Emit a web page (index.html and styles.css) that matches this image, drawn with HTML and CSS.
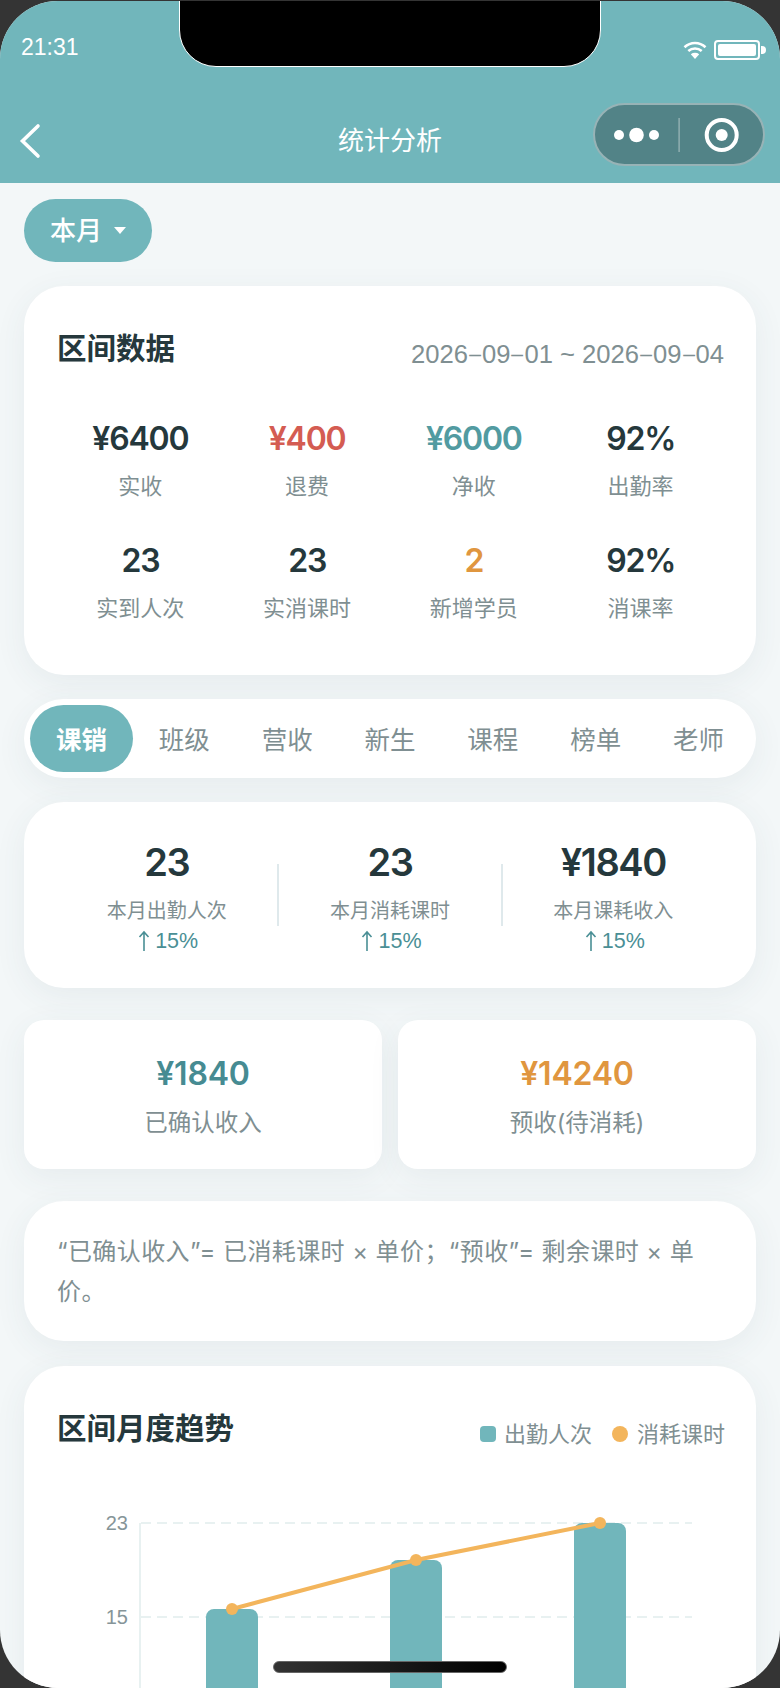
FILE: index.html
```html
<!DOCTYPE html>
<html lang="zh-CN">
<head>
<meta charset="utf-8">
<title>统计分析</title>
<link rel="stylesheet" href="styles.css">
</head>
<body>
<div class="device">
  <div class="screen">
    <header class="topbar">
      <div class="status">
        <span class="time">21:31</span>
        <div class="status-icons">
          <svg class="wifi" width="24" height="20" viewBox="0 0 24 20"><path class="wifi-arc" d="M1.5 7.2C7.5 1.6 16.5 1.6 22.5 7.2"/><path class="wifi-arc" d="M5.3 11C9.2 7.6 14.8 7.6 18.7 11"/><path class="wifi-dot" d="M12 19L7.8 14.2C10.3 12.4 13.7 12.4 16.2 14.2Z"/></svg>
          <div class="battery"><div class="battery-fill"></div></div>
          <div class="battery-nub"></div>
        </div>
      </div>
      <nav class="navbar">
        <svg class="back" width="24" height="36" viewBox="0 0 24 36"><path class="chevron" d="M19 3L3.5 18L19 33"/></svg>
        <h1 class="nav-title">统计分析</h1>
        <div class="capsule">
          <svg width="172" height="60" viewBox="0 0 172 60"><circle class="cap-fill" cx="26" cy="30" r="5"/><circle class="cap-fill" cx="43.5" cy="30" r="7.3"/><circle class="cap-fill" cx="61" cy="30" r="5"/><rect class="cap-div" x="85.5" y="13" width="1.2" height="34"/><circle class="cap-ring" cx="128.7" cy="30" r="15"/><circle class="cap-fill" cx="128.7" cy="30" r="6"/></svg>
        </div>
      </nav>
    </header>

    <main class="content">
      <button class="filter">本月<span class="caret"></span></button>

      <section class="card range">
        <div class="card-head">
          <h2 class="card-title range-title">区间数据</h2>
          <span class="range-date">2026<span class="dash">-</span>09<span class="dash">-</span>01 ~ 2026<span class="dash">-</span>09<span class="dash">-</span>04</span>
        </div>
        <div class="stats">
          <div class="stat"><div class="stat-val">¥6400</div><div class="stat-label">实收</div></div>
          <div class="stat"><div class="stat-val red">¥400</div><div class="stat-label">退费</div></div>
          <div class="stat"><div class="stat-val teal-l">¥6000</div><div class="stat-label">净收</div></div>
          <div class="stat"><div class="stat-val">92%</div><div class="stat-label">出勤率</div></div>
          <div class="stat"><div class="stat-val">23</div><div class="stat-label">实到人次</div></div>
          <div class="stat"><div class="stat-val">23</div><div class="stat-label">实消课时</div></div>
          <div class="stat"><div class="stat-val orange">2</div><div class="stat-label">新增学员</div></div>
          <div class="stat"><div class="stat-val">92%</div><div class="stat-label">消课率</div></div>
        </div>
      </section>

      <div class="tabs">
        <span class="tab active">课销</span>
        <span class="tab">班级</span>
        <span class="tab">营收</span>
        <span class="tab">新生</span>
        <span class="tab">课程</span>
        <span class="tab">榜单</span>
        <span class="tab">老师</span>
      </div>

      <section class="card kpis">
        <div class="kpi"><div class="kpi-val">23</div><div class="kpi-label">本月出勤人次</div><div class="kpi-trend"><svg class="arrow" width="12" height="22" viewBox="0 0 12 22"><path class="arrow-path" d="M6 21V2M1.5 7L6 2L10.5 7"/></svg>15%</div></div>
        <div class="kpi-div"></div>
        <div class="kpi"><div class="kpi-val">23</div><div class="kpi-label">本月消耗课时</div><div class="kpi-trend"><svg class="arrow" width="12" height="22" viewBox="0 0 12 22"><path class="arrow-path" d="M6 21V2M1.5 7L6 2L10.5 7"/></svg>15%</div></div>
        <div class="kpi-div"></div>
        <div class="kpi"><div class="kpi-val">¥1840</div><div class="kpi-label">本月课耗收入</div><div class="kpi-trend"><svg class="arrow" width="12" height="22" viewBox="0 0 12 22"><path class="arrow-path" d="M6 21V2M1.5 7L6 2L10.5 7"/></svg>15%</div></div>
      </section>

      <div class="pair">
        <section class="mini"><div class="mini-val teal-d">¥1840</div><div class="mini-label">已确认收入</div></section>
        <section class="mini"><div class="mini-val orange">¥14240</div><div class="mini-label">预收(待消耗)</div></section>
      </div>

      <section class="card note">“已确认收入”= 已消耗课时 × 单价；“预收”= 剩余课时 × 单价。</section>

      <section class="card trend">
        <div class="card-head">
          <h2 class="card-title">区间月度趋势</h2>
          <div class="legend">
            <span class="key key-bar"></span><span class="key-text">出勤人次</span>
            <span class="key key-line"></span><span class="key-text">消耗课时</span>
          </div>
        </div>
        <svg class="chart" width="732" height="230" viewBox="0 0 732 230">
          <line class="grid" x1="117" y1="57" x2="668" y2="57"/>
          <line class="grid" x1="117" y1="151" x2="668" y2="151"/>
          <line class="axis" x1="116" y1="57" x2="116" y2="230"/>
          <text class="tick" x="104" y="64">23</text>
          <text class="tick" x="104" y="158">15</text>
          <path class="bar" d="M182 230V151a8 8 0 0 1 8-8h36a8 8 0 0 1 8 8v79z"/>
          <path class="bar" d="M366 230V102a8 8 0 0 1 8-8h36a8 8 0 0 1 8 8v128z"/>
          <path class="bar" d="M550 230V65a8 8 0 0 1 8-8h36a8 8 0 0 1 8 8v165z"/>
          <polyline class="line" points="208,143 392,94 576,57"/>
          <circle class="dot" cx="208" cy="143" r="6"/>
          <circle class="dot" cx="392" cy="94" r="6"/>
          <circle class="dot" cx="576" cy="57" r="6"/>
        </svg>
      </section>
    </main>

    <div class="notch"></div>
    <div class="home"></div>
  </div>
</div>
</body>
</html>
```

FILE: styles.css
```css
* { box-sizing: border-box; }
html, body { margin: 0; padding: 0; width: 780px; height: 1688px; overflow: hidden; }
body { background: #343434; font-family: Inter, "Noto Sans CJK SC", sans-serif; color: #25383c; }
.device { width: 780px; height: 1688px; padding-top: 1px; }
.screen { position: relative; width: 780px; height: 1687px; border-radius: 58px; overflow: hidden; background: #f3f7f8; }

.topbar { height: 182px; background: #71b6bb; color: #fff; }
.status { height: 93px; padding: 32px 14px 0 21px; display: flex; justify-content: space-between; align-items: flex-start; }
.time { font-size: 23px; line-height: 28px; font-family: "Liberation Sans", sans-serif; }
.status-icons { display: flex; align-items: center; height: 28px; margin-top: 3px; }
.wifi { margin-right: 7px; }
.wifi-arc { fill: none; stroke: #fff; stroke-width: 2.6; }
.wifi-dot { fill: #fff; }
.battery { width: 46px; height: 20px; border: 2px solid #fff; border-radius: 4px; padding: 2px; }
.battery-fill { width: 100%; height: 100%; background: #fff; border-radius: 2px; }
.battery-nub { width: 5px; height: 8px; background: #fff; border-radius: 0 4px 4px 0; margin-left: 1px; }

.navbar { position: relative; height: 89px; display: flex; align-items: center; justify-content: center; }
.back { position: absolute; left: 19px; top: 29px; }
.chevron { fill: none; stroke: #fff; stroke-width: 3.6; stroke-linecap: round; stroke-linejoin: miter; }
.nav-title { margin: 0; font-size: 26px; font-weight: 400; line-height: 36px; position: relative; top: 2px; }
.capsule { position: absolute; left: 593px; top: 9px; width: 172px; height: 63px; border-radius: 32px; background: #528387; border: 2px solid #97b3b6; display: flex; align-items: center; justify-content: center; }
.capsule svg { flex: none; }
.cap-fill { fill: #fff; }
.cap-div { fill: #9fb9bb; }
.cap-ring { fill: none; stroke: #fff; stroke-width: 4; }

.content { padding: 16px 24px 0; }
.filter { display: flex; align-items: center; justify-content: flex-start; height: 63px; width: 128px; padding: 0 0 0 26px; border: 0; border-radius: 32px; background: #71b6bb; color: #fff; font: 500 26px/36px Inter, "Noto Sans CJK SC", sans-serif; }
.caret { width: 0; height: 0; margin-left: 12px; border-left: 6.5px solid transparent; border-right: 6.5px solid transparent; border-top: 7px solid #fff; }

.card { background: #fff; border-radius: 40px; box-shadow: 0 8px 32px rgba(50, 85, 95, 0.07); }
.card-head { display: flex; justify-content: space-between; align-items: center; }
.card-title { margin: 0; font-size: 29.5px; line-height: 40px; font-weight: 700; color: #25383c; }
.range-title { position: relative; top: -2px; }

.range { margin-top: 24px; height: 389px; padding: 44px 32px 0 33px; }
.range-date { font-size: 25.6px; line-height: 36px; color: #7f8f92; font-family: "Liberation Sans", sans-serif; position: relative; top: 4px; }
.dash { display: inline-block; width: 14px; text-align: center; transform: scale(1.9, 0.75); }
.stats { display: grid; grid-template-columns: repeat(4, 1fr); row-gap: 37px; margin-top: 47px; }
.stat { text-align: center; }
.stat-val { font-size: 32px; line-height: 44px; font-weight: 600; letter-spacing: -1.2px; }
.stat-label { margin-top: 9px; font-size: 22px; line-height: 32px; color: #7f8f92; }
.red { color: #d45c52; }
.teal-l { color: #529ba1; }
.teal-d { color: #468b92; }
.orange { color: #e0963f; }

.tabs { margin-top: 24px; height: 79px; padding: 6px; display: grid; grid-template-columns: repeat(7, 1fr); background: #fff; border-radius: 40px; box-shadow: 0 8px 32px rgba(50, 85, 95, 0.07); }
.tab { display: flex; align-items: center; justify-content: center; font-size: 25.5px; color: #7f8f92; padding-bottom: 3px; }
.tab.active { background: #71b6bb; color: #fff; border-radius: 34px; font-weight: 700; }

.kpis { margin-top: 24px; height: 186px; display: flex; align-items: flex-start; padding: 34px 32px 0; }
.kpi { flex: 1; text-align: center; }
.kpi-val { font-size: 38px; line-height: 52px; font-weight: 600; letter-spacing: -1.4px; }
.kpi-label { margin-top: 8px; font-size: 20px; line-height: 30px; color: #7f8f92; }
.kpi-trend { display: flex; justify-content: center; align-items: center; padding-left: 3px; font-size: 21.5px; line-height: 30px; color: #4a8f95; font-family: "Liberation Sans", sans-serif; }
.arrow { margin-right: 5px; }
.arrow-path { fill: none; stroke: #4a8f95; stroke-width: 1.6; }
.kpi-div { flex: none; width: 2px; height: 62px; margin-top: 28px; background: #dfe9ec; }

.pair { margin-top: 32px; display: flex; gap: 16px; }
.mini { flex: 1; height: 149px; padding-top: 31px; border-radius: 20px; background: #fff; text-align: center; box-shadow: 0 8px 32px rgba(50, 85, 95, 0.07); }
.mini-val { font-size: 32px; line-height: 46px; font-weight: 600; letter-spacing: -0.2px; }
.mini-label { margin-top: 9px; font-size: 23.5px; line-height: 34px; color: #7f8f92; }

.note { margin-top: 32px; height: 140px; padding: 31px 33px 0 33px; font-size: 24px; line-height: 40px; color: #7f8f92; letter-spacing: 0.4px; }

.trend { margin-top: 25px; height: 400px; padding-top: 42px; }
.trend .card-head { padding: 0 31px 0 33px; }
.legend { display: flex; align-items: center; position: relative; top: 6px; }
.key { width: 16px; height: 16px; margin-right: 9px; }
.key-bar { background: #71b6bb; border-radius: 4px; margin-right: 8px; }
.key-line { background: #f3b55c; border-radius: 50%; margin-left: 20px; }
.key-text { font-size: 22px; line-height: 32px; color: #7f8f92; }
.chart { display: block; margin-top: 18px; }
.grid { stroke: #e8f1f1; stroke-width: 2; stroke-dasharray: 10 6; }
.axis { stroke: #e8f1f1; stroke-width: 2; }
.tick { font-family: "Liberation Sans", sans-serif; font-size: 20px; fill: #869599; text-anchor: end; }
.bar { fill: #71b6bb; }
.line { fill: none; stroke: #f3b55c; stroke-width: 4; }
.dot { fill: #f3b55c; }

.notch { position: absolute; left: 179px; top: -2px; width: 422px; height: 68px; background: #000; border: 1.5px solid #fff; border-radius: 0 0 37px 37px; }
.home { position: absolute; left: 273px; top: 1660px; width: 234px; height: 12px; border-radius: 6px; background: linear-gradient(90deg, #333, #000); border: 1px solid #666; }
```
